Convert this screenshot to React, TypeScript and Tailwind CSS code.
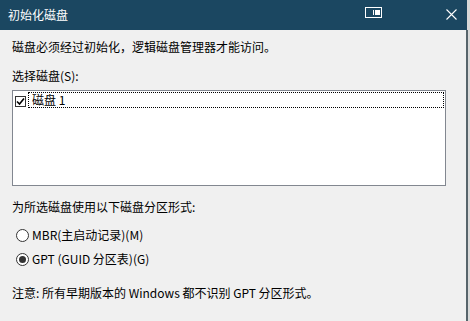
import React from "react";

const font = { fontFamily: '"Noto Sans CJK SC", "Noto Sans", sans-serif' };

export default function App() {
  return (
    <div className="w-[470px] h-[321px] bg-[#d9d9d9] flex overflow-hidden" style={font}>
      <div className="w-[468px] h-full flex flex-col">
        <div className="h-[30px] w-[467px] bg-[#1b4761] flex items-center text-white text-[12px] relative">
          <span className="pl-[8px] leading-[16px]">初始化磁盘</span>
          <svg className="absolute left-[365px] top-[7px]" width="17" height="11" viewBox="0 0 17 11">
            <rect x="0.5" y="0.5" width="16" height="10" fill="none" stroke="#ffffff" strokeWidth="1" />
            <line x1="8.5" y1="3" x2="8.5" y2="8" stroke="#ffffff" strokeWidth="1" />
            <rect x="10" y="3" width="5" height="5" fill="#ffffff" />
          </svg>
          <svg className="absolute left-[446px] top-[9px]" width="11" height="11" viewBox="0 0 11 11">
            <path d="M0.5 0.5 L10.5 10.5 M10.5 0.5 L0.5 10.5" stroke="#ffffff" strokeWidth="1.1" fill="none" />
          </svg>
        </div>
        <div className="flex-1 bg-[#f0f0f0] border-r-2 border-[#56646b] flex flex-col pl-[12px] text-[12px] leading-[16px] text-black">
          <div className="mt-[9px]">磁盘必须经过初始化，逻辑磁盘管理器才能访问。</div>
          <div className="mt-[13px]">选择磁盘(S):</div>
          <div className="mt-[6px] w-[434px] h-[96px] bg-white border border-[#828790] pt-[1px]">
            <div className="flex items-center h-[16px]">
              <div className="ml-[2px] mt-[2px] w-[11px] h-[11px] border border-[#333333] bg-white flex items-center justify-center">
                <svg width="9" height="9" viewBox="0 0 9 9">
                  <path d="M1 4.5 L3.5 7 L8 1.5" stroke="#000000" strokeWidth="1.6" fill="none" />
                </svg>
              </div>
              <div className="ml-[2px] mr-[1px] flex-1 h-[16px] border border-dotted border-black flex items-center pl-[3px]">
                <span className="leading-[14px]">磁盘 1</span>
              </div>
            </div>
          </div>
          <div className="mt-[13px]">为所选磁盘使用以下磁盘分区形式:</div>
          <div className="mt-[12px] flex items-center">
            <div className="ml-[4px] w-[13px] h-[13px] rounded-full border border-[#333333] bg-white" />
            <span className="ml-[3px]">MBR(主启动记录)(M)</span>
          </div>
          <div className="mt-[8px] flex items-center">
            <div className="ml-[4px] w-[13px] h-[13px] rounded-full border border-[#333333] bg-white flex items-center justify-center">
              <div className="w-[7px] h-[7px] rounded-full bg-[#333333]" />
            </div>
            <span className="ml-[3px]">GPT (GUID 分区表)(G)</span>
          </div>
          <div className="mt-[18px]">注意: 所有早期版本的 Windows 都不识别 GPT 分区形式。</div>
        </div>
      </div>
    </div>
  );
}
